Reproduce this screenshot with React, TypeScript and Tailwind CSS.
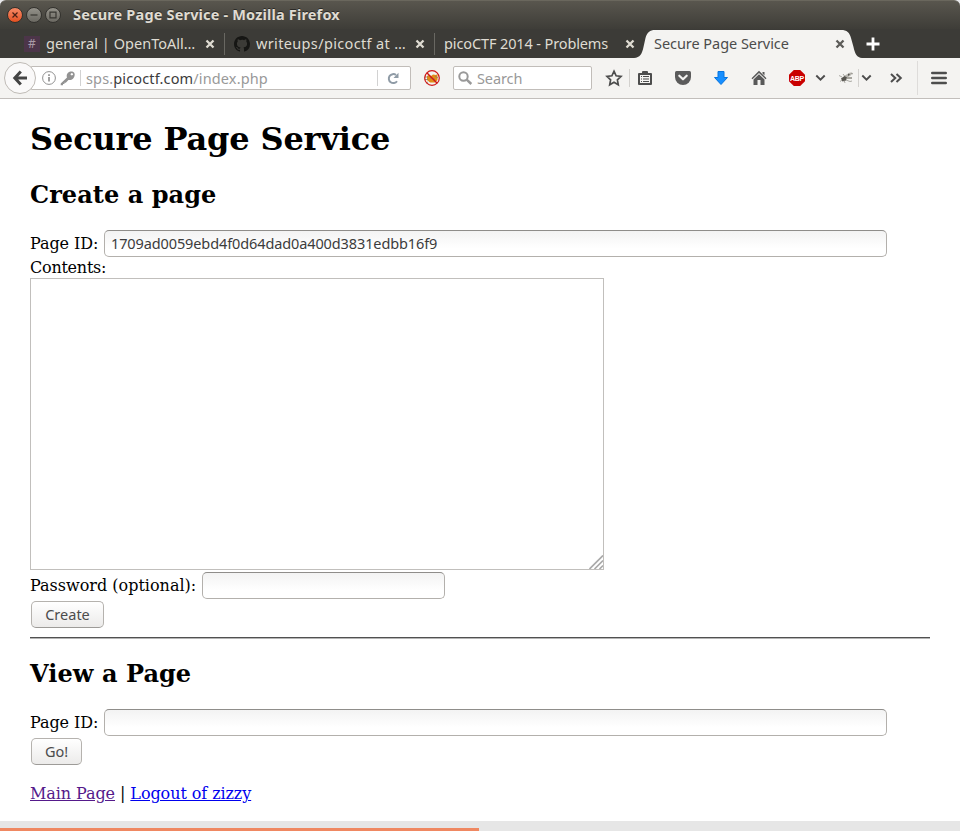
import type { ReactNode } from 'react';

const ui = "font-['Noto_Sans',sans-serif]";
const serif = "font-['DejaVu_Serif',serif]";

function Cross({ className }: { className: string }) {
  return (
    <svg width="10" height="10" viewBox="0 0 10 10" className={className} fill="none" stroke="currentColor" strokeWidth="2.3">
      <path d="M1.5 1.5 8.5 8.5M8.5 1.5 1.5 8.5" />
    </svg>
  );
}

function WindowButton({ red, children }: { red?: boolean; children: ReactNode }) {
  return (
    <span
      className={`flex h-[16px] w-[16px] items-center justify-center rounded-full border ${
        red
          ? 'border-[#33302b] bg-linear-to-b from-[#f68a66] to-[#e4501e] text-[#492015]'
          : 'border-[#33322e] bg-linear-to-b from-[#94928a] to-[#6b6962] text-[#373631]'
      }`}
    >
      <svg width="14" height="14" viewBox="0 0 14 14" fill="none" stroke="currentColor" strokeWidth="1.2" className="shrink-0">
        {children}
      </svg>
    </span>
  );
}

function TitleBar() {
  return (
    <div className="flex h-[29px] shrink-0 items-center rounded-t-[6px] border-t border-[#6a675d] bg-linear-to-b from-[#59564e] to-[#3e3d38] pl-[7px]">
      <div className="flex gap-[3px]">
        <WindowButton red><path d="M4.5 4.5 9.5 9.5M9.5 4.5 4.5 9.5" /></WindowButton>
        <WindowButton><path d="M3.5 7H10.5" /></WindowButton>
        <WindowButton><path d="M4 4.2H10V9.8H4Z" /></WindowButton>
      </div>
      <span className={`${ui} ml-[12px] pb-[2px] text-[14.5px] leading-[20px] font-bold tracking-[0.17px] whitespace-nowrap text-[#dfdbd2] [text-shadow:0_-1px_0_#2b2a27]`}>
        Secure Page Service - Mozilla Firefox
      </span>
    </div>
  );
}

function Divider() {
  return <span className="h-[22px] w-px shrink-0 bg-[#696862]" />;
}

function TabStrip() {
  const label = `${ui} shrink-0 pb-[2px] text-[14.5px] leading-[20px] whitespace-nowrap text-[#dfdbd2]`;
  return (
    <div className="flex h-[29px] shrink-0 items-stretch bg-[#3c3b37]">
      <div className="flex w-[224px] items-center pl-[24px]">
        <span className={`${ui} flex h-[16px] w-[16px] items-center justify-center bg-[#4c3549] text-[12px] leading-none text-[#a99ba7]`}>#</span>
        <span className={`${label} ml-[6px] w-[159px] tracking-[0.03px]`}>general | OpenToAll…</span>
        <Cross className="text-[#dfdbd2]" />
      </div>
      <div className="flex items-center"><Divider /></div>
      <div className="flex w-[209px] items-center pl-[9px]">
        <svg width="16" height="16" viewBox="0 0 16 16" fill="#161614">
          <path d="M8 0C3.58 0 0 3.58 0 8c0 3.54 2.29 6.53 5.47 7.59.4.07.55-.17.55-.38v-1.49c-2.01.37-2.53-.49-2.69-.94-.09-.23-.48-.94-.82-1.13-.28-.15-.68-.52-.01-.53.63-.01 1.08.58 1.23.82.72 1.21 1.87.87 2.33.66.07-.52.28-.87.51-1.07-1.78-.2-3.64-.89-3.64-3.95 0-.87.31-1.59.82-2.15-.08-.2-.36-1.02.08-2.12 0 0 .67-.21 2.2.82A7.6 7.6 0 0 1 8 3.86c.68 0 1.36.09 2 .27 1.53-1.04 2.2-.82 2.2-.82.44 1.1.16 1.92.08 2.12.51.56.82 1.27.82 2.15 0 3.07-1.87 3.75-3.65 3.95.29.25.54.73.54 1.48v2.2c0 .21.15.46.55.38A8 8 0 0 0 16 8c0-4.42-3.58-8-8-8Z" />
        </svg>
        <span className={`${label} ml-[6px] w-[159px] tracking-[0.35px]`}>writeups/picoctf at …</span>
        <Cross className="text-[#dfdbd2]" />
      </div>
      <div className="flex items-center"><Divider /></div>
      <div className="flex w-[199px] items-center pl-[9px]">
        <span className={`${label} w-[181px] tracking-[-0.12px]`}>picoCTF 2014 - Problems</span>
        <Cross className="shrink-0 text-[#dfdbd2]" />
      </div>
      <div className="relative flex w-[228px] items-center pl-[20px]">
        <svg width="228" height="29" viewBox="0 0 228 29" className="absolute inset-0">
          <path d="M0 29C6 28.500 8 25 9.500 18L11.500 9C13 3.500 16 1 21 1H207C213 1 215.500 3.500 217 9L219.500 18C221 25 223 28.500 228 29Z" fill="#f4f3f1" />
        </svg>
        <span className={`${ui} relative w-[181px] pb-[2px] text-[14.5px] leading-[20px] tracking-[-0.05px] whitespace-nowrap text-[#4c4c4c]`}>Secure Page Service</span>
        <Cross className="relative text-[#5c5b58]" />
      </div>
      <div className="flex items-center pl-[4px]">
        <svg width="14" height="14" viewBox="0 0 14 14" stroke="#fff" strokeWidth="2.8"><path d="M7 .5V13.500M.5 7H13.500" /></svg>
      </div>
    </div>
  );
}

function Chevron() {
  return (
    <svg width="11" height="8" viewBox="0 0 11 8" fill="none" stroke="#4d4d4d" strokeWidth="1.9">
      <path d="M1.300 1.500 5.500 5.700 9.700 1.500" />
    </svg>
  );
}

function NavBar() {
  return (
    <div className="flex h-[41px] shrink-0 items-center border-b border-[#c2bebb] bg-[#f4f3f1] pl-[4px]">
      <span className="z-10 flex h-[32px] w-[32px] shrink-0 items-center justify-center rounded-full border border-[#bfbbb6] bg-[#faf9f9]">
        <svg width="16" height="16" viewBox="0 0 16 16" fill="none" stroke="#444" strokeWidth="3">
          <path d="M8.800 1.500 2.800 8 8.800 14.500M3 8H15" />
        </svg>
      </span>
      <div className="-ml-[5px] flex h-[24px] w-[380px] shrink-0 items-center rounded-r-[2px] border border-[#c1bdb9] bg-white pl-[10px]">
        <svg width="14" height="14" viewBox="0 0 14 14" fill="none" stroke="#909090">
          <circle cx="7" cy="7" r="6.400" />
          <path d="M7 6V10.500M7 3.300V5" strokeWidth="1.700" />
        </svg>
        <svg width="15" height="15" viewBox="0 0 15 15" className="ml-[4px]" fill="#929292">
          <path fillRule="evenodd" d="M14.200 1.700C12.900.1 9.900-.1 8 1.800 6.700 3.100 6.400 5 7 6.500L.7 12.600V14.300H3V13.100H4.400V11.800H5.800L8.400 8.900C10 9.400 11.800 9 13 7.700 14.700 6 15.200 3.200 14.200 1.700ZM12.700 4.100A1.200 1.200 0 1 1 11 2.400 1.200 1.200 0 0 1 12.700 4.100Z" />
        </svg>
        <span className="ml-[5px] h-[16px] w-px bg-[#d2d2d2]" />
        <span className={`${ui} ml-[5px] w-[291px] text-[14.5px] leading-[20px] tracking-[0.14px] whitespace-nowrap text-[#999]`}>
          sps.<span className="text-[#3c3c3c]">picoctf.com</span>/index.php
        </span>
        <span className="h-[16px] w-px bg-[#d2d2d2]" />
        <svg width="12" height="13" viewBox="0 0 12 13" className="ml-[9px]" fill="none" stroke="#8f9ba6" strokeWidth="2">
          <path d="M10 9.200A4.500 4.500 0 1 1 9 3" />
          <path d="M11.500.8V6H6.500Z" fill="#8f9ba6" stroke="none" />
        </svg>
      </div>
      <svg width="18" height="18" viewBox="0 0 18 18" className="ml-[12px] shrink-0">
        <path d="M4 7 6 6 8 7 10 5.500 13 6 14.500 5 14.500 11 12 13.500 7 13.500 4 11Z" fill="#e18b18" />
        <path d="M1.500 8H5M1.500 10.500H5M5 13 3 14M12 7 15 9M7 9H9M10 10H12" stroke="#8c7b60" strokeWidth=".8" />
        <circle cx="9" cy="9" r="7.300" fill="none" stroke="#cf1717" strokeWidth="1.200" />
        <path d="M3.800 3.800 14.200 14.200" stroke="#cf1717" strokeWidth="1.400" />
      </svg>
      <div className="ml-[12px] flex h-[24px] w-[139px] shrink-0 items-center rounded-[2px] border border-[#c1bdb9] bg-white pl-[4px]">
        <svg width="15" height="15" viewBox="0 0 15 15" fill="none" stroke="#999" strokeWidth="2">
          <circle cx="5.500" cy="5.500" r="4.200" /><path d="M8.700 8.700 13.300 13" strokeWidth="2.500" />
        </svg>
        <span className={`${ui} ml-[4px] text-[14.5px] leading-[20px] tracking-[-0.1px] text-[#999]`}>Search</span>
      </div>
      <svg width="18" height="18" viewBox="0 0 18 18" className="ml-[13px] shrink-0" fill="none" stroke="#4d4d4d" strokeWidth="1.700">
        <path d="M9 2.200 11.100 6.800 16 7.400 12.400 10.800 13.300 15.800 9 13.300 4.700 15.800 5.600 10.800 2 7.400 6.900 6.800Z" />
      </svg>
      <span className="ml-[6px] h-[18px] w-px bg-[#d3d1ce]" />
      <svg width="14" height="15" viewBox="0 0 14 15" className="ml-[8px] shrink-0">
        <path fill="#4d4d4d" fillRule="evenodd" d="M1 2H4V1Q4 0 5 0H9Q10 0 10 1V2H13Q14 2 14 3V13Q14 14 13 14H1Q0 14 0 13V3Q0 2 1 2ZM2 4V12H12V4Z" />
        <path d="M3 5H4V6H3ZM5 5H11V6H5ZM3 7.500H4V8.500H3ZM5 7.500H11V8.500H5ZM3 10H4V11H3ZM5 10H11V11H5Z" fill="#4d4d4d" />
      </svg>
      <svg width="18" height="16" viewBox="0 0 18 16" className="ml-[22px] shrink-0">
        <path d="M2.500 1H15.500Q17 1 17 2.500V7A8 8 0 0 1 1 7V2.500Q1 1 2.500 1Z" fill="#5b5b5b" />
        <path d="M5.300 5.700 9 9.300 12.700 5.700" fill="none" stroke="#f4f3f1" strokeWidth="2.200" strokeLinecap="round" strokeLinejoin="round" />
      </svg>
      <svg width="16" height="16" viewBox="0 0 16 16" className="ml-[21px] shrink-0">
        <path d="M5 1.500H11V7.500H14.500L8 14.500 1.500 7.500H5Z" fill="#168eff" stroke="#0674df" strokeWidth="1" strokeLinejoin="round" />
      </svg>
      <svg width="16" height="16" viewBox="0 0 16 16" className="ml-[22px] shrink-0" fill="#595959">
        <path d="M8 .8 15.500 8.200 14.500 9.200 8 3 1.500 9.200.5 8.200ZM11.500 2H13.500V5.500L11.500 3.500Z" />
        <path d="M8 4.200 13.500 9.500V15H9.500V10H6.500V15H2.500V9.500Z" />
      </svg>
      <span className="ml-[22px] flex h-[16px] w-[16px] shrink-0 items-center justify-center bg-[#c90000] font-['Liberation_Sans',sans-serif] text-[7px] leading-none font-bold tracking-[-0.2px] text-white [clip-path:polygon(30%_0,70%_0,100%_30%,100%_70%,70%_100%,30%_100%,0_70%,0_30%)]">ABP</span>
      <span className="ml-[10px] shrink-0"><Chevron /></span>
      <svg width="17" height="16" viewBox="0 0 17 16" className="ml-[12px] shrink-0">
        <path d="M6 6 12 2.500 15 3 12 6 8 8ZM8 7 14 7 14 9 9 9Z" fill="#b5b3ad" />
        <path d="M3 8.500 6.500 6 9 7.500 8 10.500 4.500 11.500ZM10 3.500 12 4.500 10 6Z" fill="#56544f" />
        <path d="M1 5.500 4 7M5 4 6.500 6M8 10 12 11.500 14 11M6 10 7 13M2 11.500 4 10M13 3 15 4M9 8 14 8" stroke="#8b8983" strokeWidth=".7" fill="none" />
      </svg>
      <span className="ml-[3px] h-[18px] w-px shrink-0 bg-[#d3d1ce]" />
      <span className="ml-[2px] shrink-0"><Chevron /></span>
      <svg width="13" height="10" viewBox="0 0 13 10" className="ml-[18px] shrink-0" fill="none" stroke="#4d4d4d" strokeWidth="2">
        <path d="M1 1 5.300 5 1 9M6.500 1 10.800 5 6.500 9" />
      </svg>
      <span className="ml-[14px] h-[34px] w-px shrink-0 bg-[#dedcda]" />
      <svg width="16" height="14" viewBox="0 0 16 14" className="ml-[13px] shrink-0" stroke="#4d4d4d" strokeWidth="2.600" strokeLinecap="round">
        <path d="M1.300 2H14.700M1.300 7H14.700M1.300 12H14.700" />
      </svg>
    </div>
  );
}

const field = 'flex h-[27px] items-center rounded-[5px] border border-[#b3b0ac] border-t-[#8f8d8a] bg-linear-to-b from-[#f3f3f3] to-white to-70% pl-[6px]';
const button = `${ui} flex h-[27px] items-center justify-center rounded-[5px] border border-[#b5b2ae] border-b-[#9d9b98] bg-linear-to-b from-white to-[#ecebea] pb-[2px] text-[14.5px] leading-[20px] text-[#4c4c4c]`;

function PageContent() {
  return (
    <div className={`${serif} h-[722px] shrink-0 bg-white px-[30px] pt-[22px] text-[16px] leading-[19px] text-black`}>
      <h1 className="h-[37px] text-[32px] leading-[37px] font-bold tracking-[-0.16px]">Secure Page Service</h1>
      <h2 className="mt-[23px] h-[28px] text-[24px] leading-[28px] font-bold tracking-[0.06px]">Create a page</h2>
      <div className="mt-[21px] flex h-[27px] items-center">
        <span className="w-[74px] tracking-[-0.08px] whitespace-nowrap">Page ID:</span>
        <div className={`${field} w-[783px]`}>
          <span className={`${ui} pb-[2px] text-[14.5px] leading-[20px] tracking-[-0.11px] text-[#3c3c3c]`}>1709ad0059ebd4f0d64dad0a400d3831edbb16f9</span>
        </div>
      </div>
      <div className="mt-[1px] h-[20px] tracking-[-0.25px]">Contents:</div>
      <div className="flex h-[292px] w-[574px] items-end justify-end border border-[#c1bfbc] bg-white">
        <svg width="14" height="14" viewBox="0 0 14 14" stroke="#aaa" strokeWidth="1.700">
          <path d="M.5 14 14 .5M5.500 14 14 5.500M10.500 14 14 10.500" />
        </svg>
      </div>
      <div className="mt-[2px] flex h-[27px] items-center">
        <span className="w-[172px] whitespace-nowrap">Password (optional):</span>
        <div className={`${field} w-[243px]`} />
      </div>
      <div className={`${button} mt-[2px] ml-[1px] w-[73px]`}>Create</div>
      <div className="mt-[9px] h-[2px] w-[900px] border-t border-b border-t-[#505050] border-b-[#b5b5b5]" />
      <h2 className="mt-[21px] h-[28px] text-[24px] leading-[28px] font-bold tracking-[0.06px]">View a Page</h2>
      <div className="mt-[21px] flex h-[27px] items-center">
        <span className="w-[74px] tracking-[-0.08px] whitespace-nowrap">Page ID:</span>
        <div className={`${field} w-[783px]`} />
      </div>
      <div className={`${button} mt-[2px] ml-[1px] w-[51px]`}>Go!</div>
      <p className="mt-[19px] tracking-[-0.08px] whitespace-nowrap">
        <a className="text-[#551a8b] underline">Main Page</a> | <a className="text-[#0000ee] underline">Logout of zizzy</a>
      </p>
    </div>
  );
}

export default function App() {
  return (
    <div className="flex h-[831px] w-[960px] flex-col overflow-hidden bg-[#e9e9ec]">
      <TitleBar />
      <TabStrip />
      <NavBar />
      <PageContent />
      <div className="flex h-[10px] items-end bg-[#e6e6e6]">
        <div className="h-[3px] w-[479px] bg-[#ef8862]" />
      </div>
    </div>
  );
}
